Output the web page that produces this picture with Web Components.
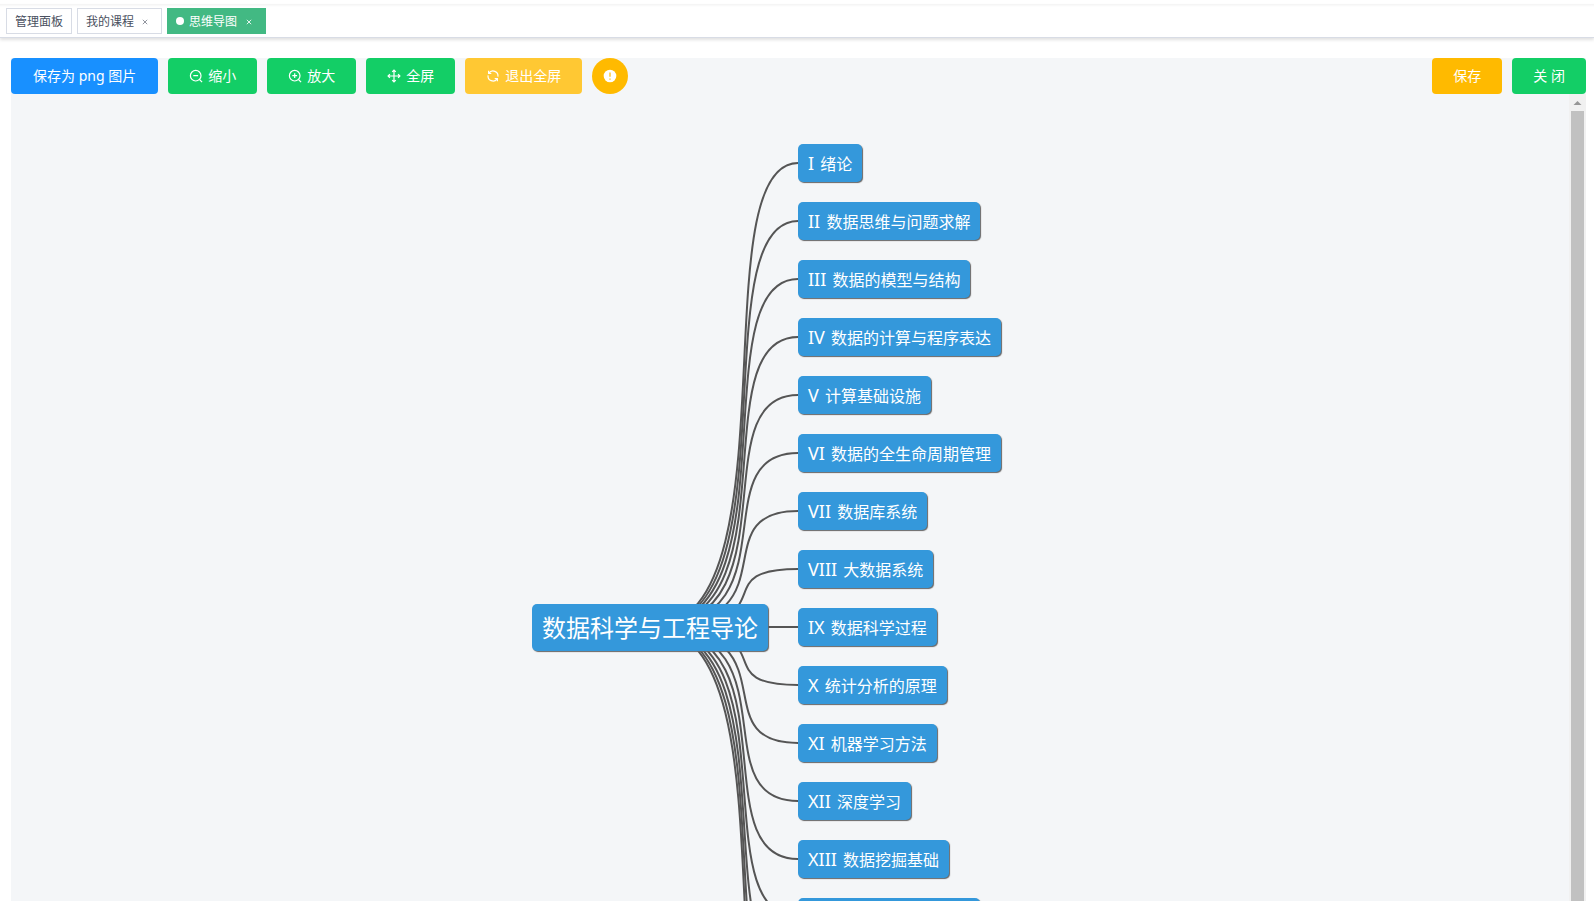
<!DOCTYPE html>
<html lang="zh-CN">
<head>
<meta charset="utf-8">
<title>思维导图</title>
<style>
    html, body {
        height: 100%;
        margin: 0;
    }
    body {
        overflow: hidden;
        background: #fff;
        font-family: "Noto Sans", "Noto Sans CJK SC", sans-serif;
    }
</style>
</head>
<body>
<mind-page></mind-page>

<script>
const ICONS = {
    zoomOut: '<circle cx="6.7" cy="6.7" r="5.3"/><path d="M4.3 6.7h4.800M10.500 10.500l2.600 2.600"/>',
    zoomIn: '<circle cx="6.7" cy="6.7" r="5.3"/><path d="M4.3 6.7h4.800M6.7 4.3v4.800M10.500 10.500l2.600 2.600"/>',
    rank: '<path d="M7 1.2v11.6M1.2 7h11.6M5.2 2.9L7 1.1l1.8 1.8M5.2 11.1L7 12.9l1.8-1.8M2.9 5.2L1.1 7l1.8 1.8M11.1 5.2L12.9 7l-1.8 1.8"/>',
    refresh: '<path d="M3 4.200A4.900 4.900 0 0 1 11.900 7.700M2.600 1.800v2.700h2.700M11 9.800A4.900 4.900 0 0 1 2.100 6.300M11.400 12.200V9.500H8.700"/>',
    warning: '<circle cx="7" cy="7" r="6.3" fill="#fff" stroke="none"/><path d="M7 3.4v4.4M7 9.6v1.2" stroke="#ffba00"/>'
};

const NODES = [
    ['I', '绪论'],
    ['II', '数据思维与问题求解'],
    ['III', '数据的模型与结构'],
    ['IV', '数据的计算与程序表达'],
    ['V', '计算基础设施'],
    ['VI', '数据的全生命周期管理'],
    ['VII', '数据库系统'],
    ['VIII', '大数据系统'],
    ['IX', '数据科学过程'],
    ['X', '统计分析的原理'],
    ['XI', '机器学习方法'],
    ['XII', '深度学习'],
    ['XIII', '数据挖掘基础'],
    ['', ''],
    ['', ''],
    ['', ''],
    ['', '']
];

const NODE_HEIGHT = 38;
const NODE_GAP = 20;

class TabItem extends HTMLElement {
    constructor() {
        super();
        this.attachShadow({mode: "open"});
    }

    connectedCallback() {
        const closable = this.hasAttribute('closable');
        this.shadowRoot.innerHTML = `
        <style>
            :host {
                display: flex;
                align-items: center;
                box-sizing: border-box;
                height: 26px;
                padding: 0 8px;
                border: 1px solid #d8dce5;
                background: #fff;
                color: #495060;
                font-size: 12px;
            }
            :host([active]) {
                background: #42b983;
                border-color: #42b983;
                color: #fff;
            }
            :host([active])::before {
                content: "";
                width: 8px;
                height: 8px;
                margin-right: 5px;
                border-radius: 50%;
                background: #fff;
            }
            :host([active]) button {
                margin-left: 4px;
            }
            a {
                padding-top: 2px;
                color: inherit;
                text-decoration: none;
                line-height: 22px;
            }
            button {
                display: flex;
                align-items: center;
                justify-content: center;
                width: 16px;
                height: 16px;
                margin: 2px 0 0 3px;
                padding: 0;
                border: 0;
                background: none;
                color: inherit;
            }
            svg {
                width: 6px;
                height: 6px;
                stroke: currentColor;
                opacity: .6;
            }
            :host([active]) svg {
                opacity: .85;
            }
        </style>
        <a href="#"><slot></slot></a>
        ${closable ? '<button type="button" aria-label="关闭"><svg viewBox="0 0 6 6"><path d="M.8 .8l4.4 4.4M5.2 .8L.8 5.2"/></svg></button>' : ''}`;
    }
}

class TabsBar extends HTMLElement {
    constructor() {
        super();
        this.attachShadow({mode: "open"}).innerHTML = `
        <style>
            :host {
                display: flex;
                gap: 5px;
                box-sizing: border-box;
                height: 34px;
                margin-top: 4px;
                padding: 4px 6px;
                border-bottom: 1px solid #d8dce5;
                background: linear-gradient(#f3f3f3, #fff 3px);
                box-shadow: 0 2px 3px 0 rgba(0, 0, 0, .12);
            }
        </style>
        <slot></slot>`;
    }
}

class ToolButton extends HTMLElement {
    constructor() {
        super();
        this.attachShadow({mode: "open"});
    }

    connectedCallback() {
        const icon = ICONS[this.getAttribute('icon')];
        const label = this.getAttribute('label');
        this.shadowRoot.innerHTML = `
        <style>
            :host {
                display: block;
                --bg: #13ce66;
            }
            :host([type="primary"]) { --bg: #1890ff; }
            :host([type="warning"]) { --bg: #ffba00; }
            :host([disabled]) { --bg: #ffc833; }
            button {
                display: flex;
                align-items: center;
                justify-content: center;
                gap: 5px;
                height: 36px;
                padding: 0 21px;
                border: 0;
                border-radius: 4px;
                background: var(--bg);
                color: #fff;
                font: inherit;
                font-size: 14px;
                line-height: 20px;
                white-space: nowrap;
            }
            :host([type="primary"]) button {
                padding: 0 22px;
            }
            :host([circle]) button {
                width: 36px;
                padding: 0;
                border-radius: 50%;
            }
            svg {
                width: 14px;
                height: 14px;
                fill: none;
                stroke: #fff;
                stroke-width: 1.2;
            }
        </style>
        <button type="button" ${label ? `aria-label="${label}"` : ''} ${this.hasAttribute('disabled') ? 'disabled' : ''}>
            ${icon ? `<svg viewBox="0 0 14 14">${icon}</svg>` : ''}${this.hasAttribute('circle') ? '' : '<span><slot></slot></span>'}
        </button>`;
    }
}

class MindNode extends HTMLElement {
    constructor() {
        super();
        this.attachShadow({mode: "open"}).innerHTML = `
        <style>
            :host {
                display: block;
                box-sizing: border-box;
                height: 38px;
                padding: 0 10px;
                border-radius: 5px;
                background: #3498db;
                box-shadow: 1px 1px 1px #666;
                color: #fff;
                font-size: 16px;
                line-height: 38px;
                white-space: nowrap;
            }
            :host([root]) {
                position: relative;
                height: 47px;
                font-size: 24px;
                line-height: 48px;
            }
            :host([blank]) {
                width: 182px;
            }
            ::slotted(b) {
                margin-right: 2px;
                font-size: 18px;
                font-weight: 400;
            }
        </style>
        <slot></slot>`;
    }
}

class MindMap extends HTMLElement {
    constructor() {
        super();
        this.attachShadow({mode: "open"});
    }

    connectedCallback() {
        this.shadowRoot.innerHTML = `
        <style>
            :host {
                display: block;
            }
            .map {
                position: relative;
                display: flex;
                align-items: center;
                justify-content: center;
                gap: 30px;
                padding: 50px 0;
            }
            .children {
                display: flex;
                flex-direction: column;
                align-items: flex-start;
                gap: ${NODE_GAP}px;
                width: 250px;
            }
            svg {
                position: absolute;
                left: 0;
                top: 0;
                width: 100%;
                height: 100%;
                fill: none;
                stroke: #555;
                stroke-width: 2;
            }
        </style>
        <div class="map">
            <svg></svg>
            <mind-node root>${this.getAttribute('topic')}</mind-node>
            <div class="children">
                ${NODES.map(([num, text]) => num ? `<mind-node><b>${num}</b> ${text}</mind-node>` : '<mind-node blank></mind-node>').join('')}
            </div>
        </div>`;
        this.drawLines();
        new ResizeObserver(() => this.drawLines()).observe(this);
    }

    // each curve leaves the child's left edge and ends in the root's centre
    drawLines() {
        const box = this.shadowRoot.querySelector('.map').getBoundingClientRect();
        const root = this.shadowRoot.querySelector('[root]').getBoundingClientRect();
        const list = this.shadowRoot.querySelector('.children').getBoundingClientRect();
        const x1 = list.left - box.left;
        const x2 = root.left + root.width / 2 - box.left;
        const y2 = box.height / 2;
        this.shadowRoot.querySelector('svg').innerHTML = NODES.map((node, i) => {
            const y1 = list.top - box.top + NODE_HEIGHT / 2 + i * (NODE_HEIGHT + NODE_GAP);
            return `<path d="M${x1} ${y1}C${x1 + (x2 - x1) * 2 / 3} ${y1} ${x1} ${y2} ${x2} ${y2}"/>`;
        }).join('');
    }
}

class ScrollTrack extends HTMLElement {
    constructor() {
        super();
        this.attachShadow({mode: "open"}).innerHTML = `
        <style>
            :host {
                display: flex;
                flex-direction: column;
                align-items: center;
                width: 17px;
                background: #f1f1f1;
            }
            svg {
                flex: none;
                width: 17px;
                height: 17px;
                fill: #969696;
            }
            .thumb {
                flex: 1;
                width: 13px;
                background: #c1c1c1;
            }
        </style>
        <svg viewBox="0 0 17 17"><path d="M4.500 11L8.500 7L12.500 11z"/></svg>
        <div class="thumb"></div>`;
    }
}

class MindPage extends HTMLElement {
    constructor() {
        super();
        this.attachShadow({mode: "open"}).innerHTML = `
        <style>
            :host {
                display: flex;
                flex-direction: column;
                height: 100%;
                overflow: hidden;
            }
            main {
                flex: 1;
                min-height: 0;
                display: flex;
                flex-direction: column;
                margin: 20px 8px 0 11px;
                background: #f4f6f8;
            }
            .tools {
                display: flex;
                gap: 10px;
            }
            .space {
                flex: 1;
            }
            .view {
                flex: 1;
                min-height: 0;
                display: flex;
            }
            mind-map {
                flex: 1;
                overflow: hidden;
            }
        </style>
        <tabs-bar>
            <tab-item>管理面板</tab-item>
            <tab-item closable>我的课程</tab-item>
            <tab-item closable active>思维导图</tab-item>
        </tabs-bar>
        <main>
            <div class="tools">
                <tool-button type="primary">保存为 png 图片</tool-button>
                <tool-button icon="zoomOut">缩小</tool-button>
                <tool-button icon="zoomIn">放大</tool-button>
                <tool-button icon="rank">全屏</tool-button>
                <tool-button icon="refresh" disabled>退出全屏</tool-button>
                <tool-button type="warning" icon="warning" circle label="提示"></tool-button>
                <div class="space"></div>
                <tool-button type="warning">保存</tool-button>
                <tool-button>关 闭</tool-button>
            </div>
            <div class="view">
                <mind-map topic="数据科学与工程导论"></mind-map>
                <scroll-track></scroll-track>
            </div>
        </main>`;
    }
}

customElements.define("tab-item", TabItem);
customElements.define("tabs-bar", TabsBar);
customElements.define("tool-button", ToolButton);
customElements.define("mind-node", MindNode);
customElements.define("mind-map", MindMap);
customElements.define("scroll-track", ScrollTrack);
customElements.define("mind-page", MindPage);
</script>
</body>
</html>
